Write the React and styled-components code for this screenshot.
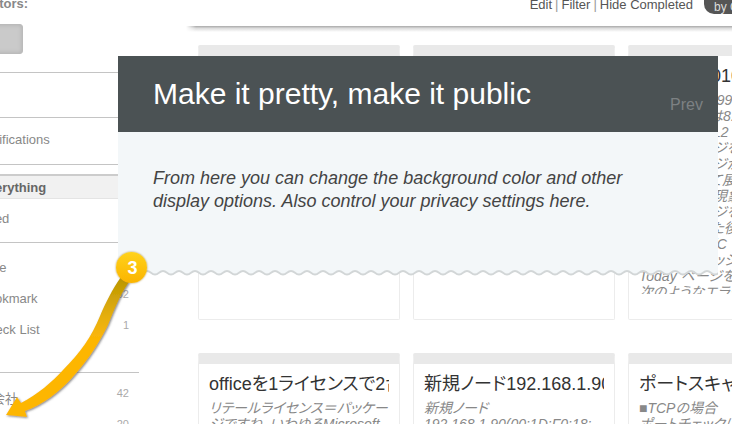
import styled, { createGlobalStyle } from "styled-components";

const GlobalStyle = createGlobalStyle`
  * {
    box-sizing: border-box;
  }

  body {
    margin: 0;
    overflow: hidden;
    background: #fff;
    color: #888;
    font-family: "Liberation Sans", Arial, "Noto Sans CJK JP", sans-serif;
    font-size: 13px;
  }

  p, h2, h3, ul {
    margin: 0;
    padding: 0;
  }
`;

const StyledPage = styled.div`
  position: relative;
  display: flex;
  height: 100vh;
  overflow: hidden;
`;

const StyledSidebar = styled.aside`
  flex: 0 0 160px;
  margin-left: -21px;
`;

const StyledSidebarTitle = styled.h3`
  height: 24px;
  font-size: 13px;
  line-height: 8px;
`;

const StyledAvatar = styled.button`
  display: block;
  width: 44px;
  height: 30px;
  margin-bottom: 18px;
  border: 1px solid #bbb;
  border-radius: 3px;
  background: #cacaca;
  box-shadow: inset 0 0 4px #b0b0b0;
`;

const StyledGroup = styled.ul`
  list-style: none;
  border-top: 1px solid #c4c4c4;
  padding: ${(props) => props.$pad || "0"};
  min-height: ${(props) => props.$height || "0"};
`;

const StyledItem = styled.li`
  display: flex;
  justify-content: space-between;
  align-items: center;
  height: ${(props) => (props.$active ? "25px" : "31px")};
  margin-bottom: ${(props) => (props.$active ? "4px" : "0")};
  padding-right: 10px;
  border-top: ${(props) => (props.$active ? "2px solid #ccc" : "0")};
  border-bottom: ${(props) => (props.$active ? "1px solid #e4e4e4" : "0")};
  background: ${(props) => (props.$active ? "#f1f1f1" : "none")};
`;

const StyledLink = styled.a`
  color: ${(props) => (props.$active ? "#666" : "#888")};
  font-weight: ${(props) => (props.$active ? "700" : "400")};
  text-decoration: none;
  white-space: nowrap;
`;

const StyledCount = styled.span`
  color: #aaa;
  font-size: 11px;
  line-height: 22px;
  align-self: flex-start;
`;

const StyledMain = styled.main`
  flex: 0 0 660px;
  margin-left: 47px;
`;

const StyledToolbar = styled.nav`
  display: flex;
  justify-content: flex-end;
  height: 26px;
  padding-right: 30px;
  color: #999;
  line-height: 10px;
  white-space: nowrap;
`;

const StyledToolLink = styled.a`
  padding: 0 3px;
  color: #555;
  text-decoration: none;
`;

const StyledSort = styled.button`
  width: 112px;
  height: 14px;
  margin-left: 8px;
  padding: 0 10px;
  border: 0;
  border-radius: 0 0 10px 10px;
  background: #555;
  color: #ddd;
  font: 12px/10px "Liberation Sans", Arial, sans-serif;
  text-align: left;
`;

const StyledShadow = styled.div`
  height: 6px;
  background: linear-gradient(#a8a8a8, #ddd 40%, #fff);
  mask-image: linear-gradient(90deg, transparent, #000 10px);
`;

const StyledGrid = styled.div`
  display: grid;
  grid-template-columns: repeat(3, 202px);
  gap: 33px 13px;
  padding: 13px 12px;
`;

const StyledCard = styled.article`
  height: 275px;
  padding: 0 10px;
  border: 1px solid #ececec;
  border-top: 11px solid #e9e9e9;
  border-radius: 2px;
`;

const StyledCardTitle = styled.h3`
  height: 36px;
  overflow: hidden;
  color: #333;
  font-size: 18px;
  font-weight: 400;
  line-height: 40px;
  white-space: nowrap;
  font-feature-settings: "palt";
`;

const StyledCardText = styled.p`
  height: 202px;
  overflow: hidden;
  font-size: 14px;
  font-style: italic;
  line-height: 16px;
  white-space: pre;
  font-feature-settings: "palt";
`;

const StyledTip = styled.section`
  position: absolute;
  top: 56px;
  left: 118px;
  right: 14px;
`;

const StyledTipHeader = styled.header`
  display: flex;
  justify-content: space-between;
  height: 76px;
  padding: 0 15px 0 35px;
  background: #4b5254;
`;

const StyledTipTitle = styled.h2`
  color: #fff;
  font-size: 30px;
  font-weight: 400;
  line-height: 76px;
`;

const StyledPrev = styled.button`
  padding: 22px 0 0;
  border: 0;
  background: none;
  color: #7d8183;
  font: 16px "Liberation Sans", Arial, sans-serif;
`;

const StyledTipText = styled.p`
  height: 138px;
  padding: 35px 80px 0 35px;
  background: #f3f7f9;
  color: #444;
  font-size: 18px;
  font-style: italic;
  line-height: 23px;
`;

const StyledWave = styled.svg`
  display: block;
  width: 100%;
  height: 6px;
`;

const StyledPointer = styled.svg`
  position: absolute;
  top: 240px;
  left: 0;
`;

const StyledBadge = styled.span`
  position: absolute;
  top: 252px;
  left: 116px;
  width: 31px;
  height: 31px;
  border-radius: 50%;
  background: linear-gradient(#ffd21a, #fbb400);
  box-shadow: 0 0 2px #a8862a;
  color: #fff;
  font-size: 18px;
  font-weight: 700;
  line-height: 32px;
  padding-left: 2px;
  text-align: center;
`;

const pageNotes = [
  "更新日時刻199.",
  "平成年月度は8.",
  "通信接続中 L2",
  "新規作成中 ジを",
  "別途作成中 ジが",
  "画面全体順て展",
  "画面全体中 現象",
  "新規作成中 ジを",
  "設定変更し た後に",
  "管理端末名 [C",
  "通信機器中 ッシュ",
  "Today ページを",
  "次のようなエラー",
];

const cards = [
  { title: "", lines: [] },
  { title: "", lines: [] },
  { title: "新規設定010", lines: pageNotes },
  {
    title: "officeを1ライセンスで2台",
    lines: ["リテールライセンス＝パッケー", "ジですね。いわゆるMicrosoft"],
  },
  {
    title: "新規ノード192.168.1.90",
    lines: ["新規ノード", "192.168.1.90(00:1D:F0:18:"],
  },
  {
    title: "ポートスキャン",
    lines: ["■TCPの場合", "ポートチェックは"],
  },
];

function SidebarItem({ label, count, active }) {
  return (
    <StyledItem $active={active}>
      <StyledLink href="#" $active={active}>
        {label}
      </StyledLink>
      {count && <StyledCount>{count}</StyledCount>}
    </StyledItem>
  );
}

function Sidebar() {
  return (
    <StyledSidebar>
      <StyledSidebarTitle>Editors:</StyledSidebarTitle>
      <StyledAvatar aria-label="Editor" />
      <StyledGroup $height="45px" />
      <StyledGroup $height="47px" $pad="6px 0 0">
        <SidebarItem label="Notifications" />
      </StyledGroup>
      <StyledGroup $height="78px" $pad="9px 0 0">
        <SidebarItem label="Everything" active />
        <SidebarItem label="Used" />
      </StyledGroup>
      <StyledGroup $height="130px" $pad="9px 0 0">
        <SidebarItem label="Note" count="16" />
        <SidebarItem label="Bookmark" count="32" />
        <SidebarItem label="Check List" count="1" />
      </StyledGroup>
      <StyledGroup $pad="9px 0 0">
        <SidebarItem label="子会社" count="42" />
        <SidebarItem label="Office" count="20" />
      </StyledGroup>
    </StyledSidebar>
  );
}

function Toolbar() {
  return (
    <StyledToolbar>
      <StyledToolLink href="#">Edit</StyledToolLink>|
      <StyledToolLink href="#">Filter</StyledToolLink>|
      <StyledToolLink href="#">Hide Completed</StyledToolLink>
      <StyledSort>by Created</StyledSort>
    </StyledToolbar>
  );
}

function Tip() {
  return (
    <StyledTip>
      <StyledTipHeader>
        <StyledTipTitle>Make it pretty, make it public</StyledTipTitle>
        <StyledPrev>Prev</StyledPrev>
      </StyledTipHeader>
      <StyledTipText>
        From here you can change the background color and other display
        options. Also control your privacy settings here.
      </StyledTipText>
      <StyledWave aria-hidden="true">
        <defs>
          <pattern id="wave" width="16" height="6" x="13" patternUnits="userSpaceOnUse">
            <path d="M0 0H16V.5C12 .5 12 4 8 4S4 .5 0 .5Z" fill="#f3f7f9" />
            <path
              d="M0 1C4 1 4 4.500 8 4.500S12 1 16 1"
              fill="none"
              stroke="#d2d6d7"
              strokeWidth="1.8"
            />
          </pattern>
        </defs>
        <rect width="100%" height="6" fill="url(#wave)" />
      </StyledWave>
    </StyledTip>
  );
}

function Pointer() {
  return (
    <>
      <StyledPointer width="150" height="184" aria-hidden="true">
        <defs>
          <linearGradient id="tail" x1="0" y1="0" x2="0" y2="1">
            <stop offset="0" stopColor="#b99600" />
            <stop offset=".3" stopColor="#e8b010" />
            <stop offset=".45" stopColor="#fdb605" />
          </linearGradient>
          <filter id="soft" x="-10%" y="-10%" width="120%" height="120%">
            <feDropShadow dx="1" dy="1" stdDeviation="1" floodColor="#555" floodOpacity=".7" />
          </filter>
        </defs>
        <path
          d="M121 37C112 50 106 62 100 76C92 96 80 113 63 130C52 142 38 154 21 163L17 157L6 175L27 177L25 171C43 165 59 152 72 138C89 119 99 103 108 85C114 70 120 55 129 42Z"
          fill="url(#tail)"
          filter="url(#soft)"
        />
      </StyledPointer>
      <StyledBadge>3</StyledBadge>
    </>
  );
}

function App() {
  return (
    <StyledPage>
      <GlobalStyle />
      <Sidebar />
      <StyledMain>
        <Toolbar />
        <StyledShadow />
        <StyledGrid>
          {cards.map((card, index) => (
            <StyledCard key={index}>
              <StyledCardTitle>{card.title}</StyledCardTitle>
              <StyledCardText>{card.lines.join("\n")}</StyledCardText>
            </StyledCard>
          ))}
        </StyledGrid>
      </StyledMain>
      <Tip />
      <Pointer />
    </StyledPage>
  );
}

export default App;
